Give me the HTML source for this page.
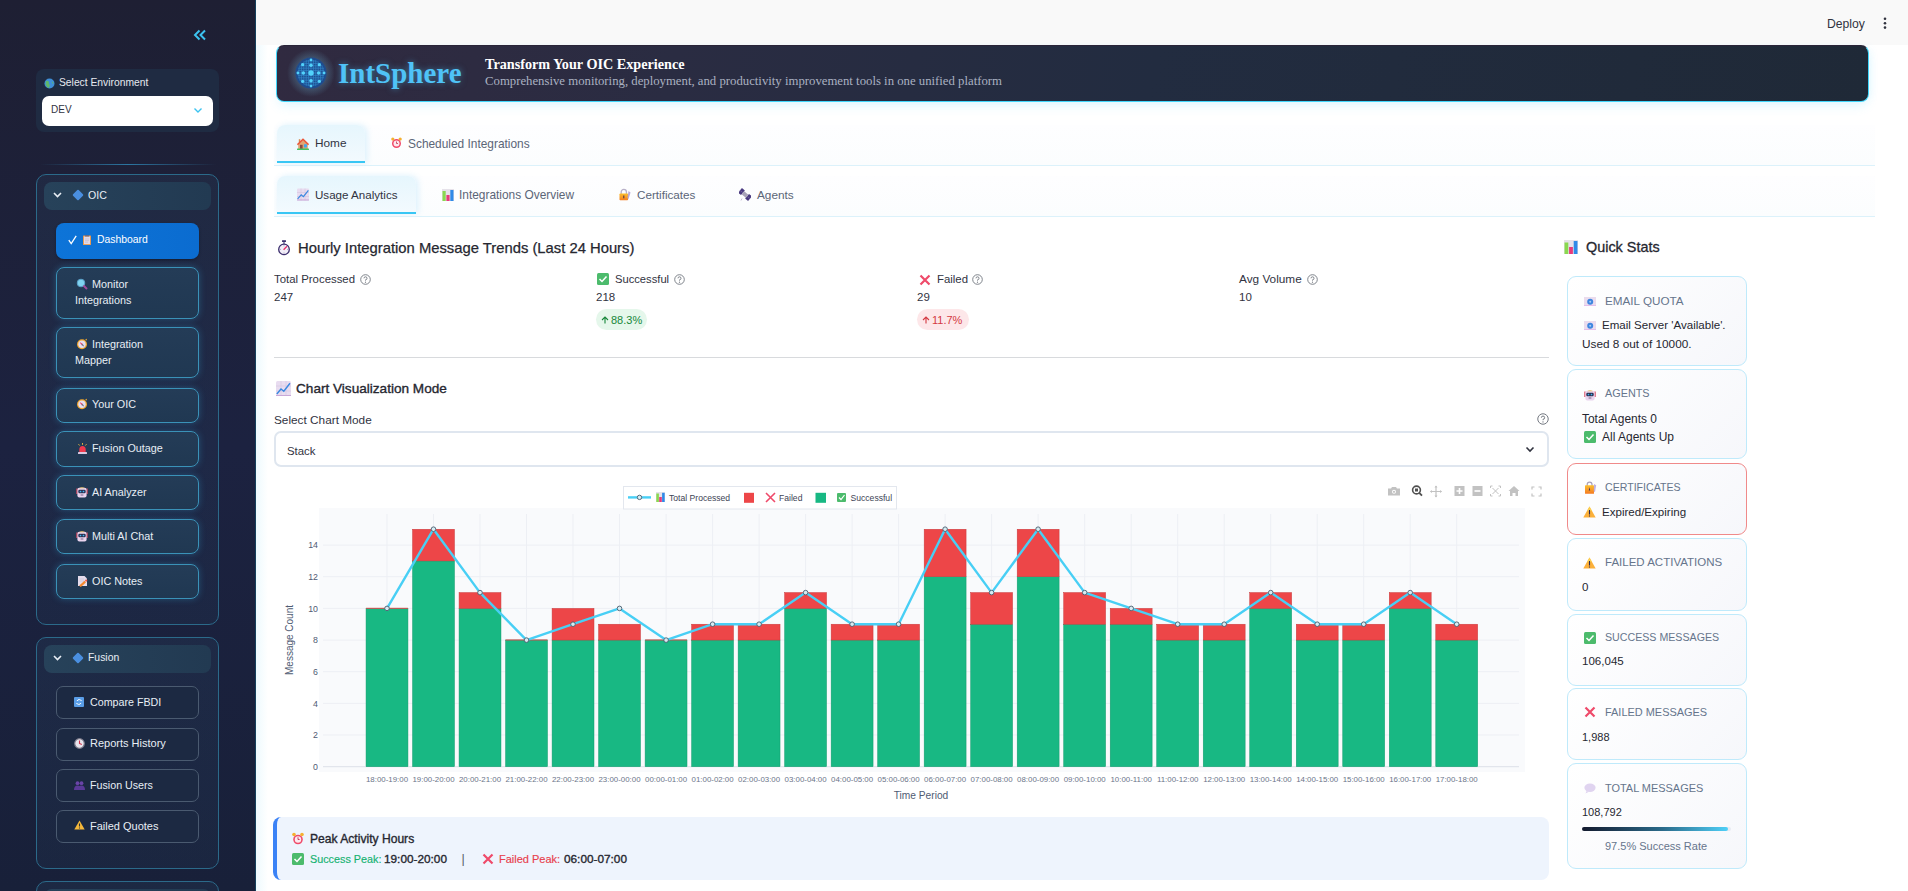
<!DOCTYPE html>
<html><head><meta charset="utf-8">
<style>
*{box-sizing:border-box;margin:0;padding:0}
html,body{width:1908px;height:891px;overflow:hidden;background:#fff;font-family:"Liberation Sans",sans-serif;color:#31333f}
.a{position:absolute}
.t{position:absolute;white-space:nowrap;line-height:1}
/* sidebar */
#sb{left:0;top:0;width:256px;height:891px;background:linear-gradient(180deg,#1e1f33 0%,#1c2240 50%,#182039 100%);border-right:1px solid #15405c}
#hdr{left:256px;top:0;width:1652px;height:45px;background:#f9f9f9}
#mainbg{left:256px;top:45px;width:1652px;height:846px;background:linear-gradient(90deg,#eefafe 0px,#ffffff 12px)}
.nbtn{position:absolute;left:56px;width:143px;border:1px solid #3a92b8;border-radius:8px;background:linear-gradient(180deg,#243c57,#203852);box-shadow:0 0 7px rgba(56,189,248,.28);color:#e8eef5;font-size:11.5px}
.fbtn{position:absolute;left:56px;width:143px;height:33px;border:1px solid #4a5a70;border-radius:7px;background:#1c2942;color:#e8eef5;font-size:11.5px}
.grp{position:absolute;left:36px;width:183px;border:1px solid #2b6a8a;border-radius:10px;background:linear-gradient(180deg,rgba(44,74,104,.22),rgba(40,70,100,.16))}
.ghdr{position:absolute;left:44px;width:167px;border-radius:8px;background:linear-gradient(90deg,#27425a,#223a52)}
.card{position:absolute;left:1567px;width:180px;border:1px solid #bfeafb;border-radius:9px;background:linear-gradient(135deg,#ffffff,#f6f7fb)}
.ct{position:absolute;left:38px;font-size:12px;color:#647189;letter-spacing:.1px}
.cv{position:absolute;left:15px;font-size:12px;color:#222}
</style></head><body>
<div id="sb" class="a"></div>
<div id="hdr" class="a"></div>
<div id="mainbg" class="a"></div>

<!-- SIDEBAR CONTENT -->
<svg class="a" style="left:193px;top:29px" width="14" height="12" viewBox="0 0 14 12"><path d="M6.5 1.5 L2 6 L6.5 10.5 M12 1.5 L7.5 6 L12 10.5" fill="none" stroke="#3cc3f0" stroke-width="2"/></svg>
<div class="a" style="left:36px;top:69px;width:183px;height:63px;background:#1f2b42;border-radius:8px"></div>
<svg class="a" style="left:44px;top:78px" width="11" height="11" viewBox="0 0 11 11"><circle cx="5.5" cy="5.5" r="5" fill="#3f8fd8"/><path d="M2 3 Q4 2 5 4 Q4 6 6 7 L5 10 Q2 9 1.5 6Z" fill="#5fb86a"/><path d="M7 1.5 Q9 3 8 5 L10 6" fill="#5fb86a"/></svg>
<div class="t" style="left:59px;top:78px;font-size:10.3px;color:#e6e9ef">Select Environment</div>
<div class="a" style="left:42px;top:96px;width:171px;height:30px;background:#fff;border-radius:7px"></div>
<div class="t" style="left:51px;top:105px;font-size:10px;color:#31333f">DEV</div>
<svg class="a" style="left:193px;top:107px" width="10" height="7" viewBox="0 0 10 7"><path d="M1.5 1.5 L5 5 L8.5 1.5" fill="none" stroke="#3cc3f0" stroke-width="1.4"/></svg>
<div class="a" style="left:40px;top:164px;width:176px;height:1px;background:linear-gradient(90deg,rgba(56,189,248,0),rgba(56,189,248,.55),rgba(56,189,248,0))"></div>

<div class="grp" style="top:174px;height:451px"></div>
<div class="ghdr" style="top:182px;height:28px"></div>
<svg class="a" style="left:53px;top:192px" width="9" height="6" viewBox="0 0 9 6"><path d="M1 1 L4.5 4.5 L8 1" fill="none" stroke="#e8eef5" stroke-width="1.6"/></svg>
<div class="a" style="left:74px;top:191px;width:8px;height:8px;background:#4a8fe0;transform:rotate(45deg);border-radius:1px"></div>
<div class="t" style="left:88px;top:190px;font-size:10.6px;color:#e8eef5">OIC</div>

<div class="a" style="left:56px;top:223px;width:143px;height:36px;border-radius:8px;background:linear-gradient(90deg,#0d74d8,#0b6cd0);box-shadow:0 1px 3px rgba(0,0,0,.3)"></div>
<svg class="a" style="left:68px;top:235px" width="9" height="10" viewBox="0 0 9 10"><path d="M0.8 5.2L3.2 8.6L8.2 0.8" stroke="#fff" stroke-width="1.3" fill="none"/></svg>
<svg class="a" style="left:83px;top:235px" width="8" height="10" viewBox="0 0 8 10"><rect x="0" y="0.5" width="8" height="9.5" rx=".6" fill="#ea9a50"/><rect x="1" y="1.5" width="6" height="7.6" fill="#e2dae8"/><rect x="2" y="0" width="4" height="1.6" rx=".4" fill="#6e6a80"/><path d="M2 4H6M2 5.6H6M2 7.2H5" stroke="#b8b0c4" stroke-width=".5"/></svg>
<div class="t" style="left:97px;top:235px;font-size:10.4px;color:#fff">Dashboard</div>

<div class="nbtn" style="top:267px;height:52px"></div>
<svg class="a" style="left:76px;top:278px" width="12" height="12" viewBox="0 0 12 12"><circle cx="5" cy="5" r="3.8" fill="#7fd3f0" stroke="#5aa0c8" stroke-width="1"/><path d="M7.5 7.5 L11 11" stroke="#a04a9a" stroke-width="2"/></svg>
<div class="t" style="left:92px;top:279px;font-size:10.8px;color:#e8eef5">Monitor</div>
<div class="t" style="left:75px;top:295px;font-size:10.8px;color:#e8eef5">Integrations</div>

<div class="nbtn" style="top:327px;height:51px"></div>
<svg class="a" style="left:76px;top:338px" width="12" height="12" viewBox="0 0 12 12"><circle cx="6" cy="6.3" r="5" fill="#f2a82e"/><circle cx="6" cy="6.3" r="3.7" fill="#e6def0"/><path d="M3.6 3.9L6.6 5.7L5.4 6.9Z" fill="#e84062"/><path d="M8.4 8.7L5.4 6.9L6.6 5.7Z" fill="#6a6a7a"/><path d="M9.2 1.2L11 0.8L10.5 2.8Z" fill="#f2a82e"/></svg>
<div class="t" style="left:92px;top:339px;font-size:10.8px;color:#e8eef5">Integration</div>
<div class="t" style="left:75px;top:355px;font-size:10.8px;color:#e8eef5">Mapper</div>

<div class="nbtn" style="top:388px;height:35px"></div>
<svg class="a" style="left:76px;top:398px" width="12" height="12" viewBox="0 0 12 12"><circle cx="6" cy="6.3" r="5" fill="#f2a82e"/><circle cx="6" cy="6.3" r="3.7" fill="#e6def0"/><path d="M3.6 3.9L6.6 5.7L5.4 6.9Z" fill="#e84062"/><path d="M8.4 8.7L5.4 6.9L6.6 5.7Z" fill="#6a6a7a"/><path d="M9.2 1.2L11 0.8L10.5 2.8Z" fill="#f2a82e"/></svg>
<div class="t" style="left:92px;top:399px;font-size:10.8px;color:#e8eef5">Your OIC</div>

<div class="nbtn" style="top:431px;height:36px"></div>
<svg class="a" style="left:77px;top:443px" width="11" height="11" viewBox="0 0 11 11"><path d="M2.3 9.5V6.5Q2.3 3 5.5 3Q8.7 3 8.7 6.5V9.5Z" fill="#f03a4e"/><rect x="1" y="9" width="9" height="2" rx=".5" fill="#d8c8e0"/><path d="M5.5 0V1.8M1.5 1.2L2.6 2.5M9.5 1.2L8.4 2.5" stroke="#f5c040" stroke-width=".9"/></svg>
<div class="t" style="left:92px;top:443px;font-size:10.8px;color:#e8eef5">Fusion Outage</div>

<div class="nbtn" style="top:475px;height:35px"></div>
<svg class="a" style="left:76px;top:486px" width="12" height="12" viewBox="0 0 12 12"><rect x="0.3" y="2.5" width="1.3" height="5.5" fill="#d84a62"/><rect x="10.4" y="2.5" width="1.3" height="5.5" fill="#d84a62"/><rect x="1.4" y="1.8" width="9.2" height="9.6" rx="2" fill="#ead4ee"/><path d="M3 2.2Q6 0.2 9 2.2Z" fill="#e8c060"/><rect x="2.3" y="3.8" width="7.4" height="3.4" rx="1.2" fill="#2a3052"/><circle cx="4.5" cy="5.5" r=".85" fill="#3fb6f2"/><circle cx="7.5" cy="5.5" r=".85" fill="#3fb6f2"/><rect x="4.6" y="8.6" width="2.8" height=".8" fill="#5a4a70"/></svg>
<div class="t" style="left:92px;top:487px;font-size:10.8px;color:#e8eef5">AI Analyzer</div>

<div class="nbtn" style="top:519px;height:35px"></div>
<svg class="a" style="left:76px;top:530px" width="12" height="12" viewBox="0 0 12 12"><rect x="0.3" y="2.5" width="1.3" height="5.5" fill="#d84a62"/><rect x="10.4" y="2.5" width="1.3" height="5.5" fill="#d84a62"/><rect x="1.4" y="1.8" width="9.2" height="9.6" rx="2" fill="#ead4ee"/><path d="M3 2.2Q6 0.2 9 2.2Z" fill="#e8c060"/><rect x="2.3" y="3.8" width="7.4" height="3.4" rx="1.2" fill="#2a3052"/><circle cx="4.5" cy="5.5" r=".85" fill="#3fb6f2"/><circle cx="7.5" cy="5.5" r=".85" fill="#3fb6f2"/><rect x="4.6" y="8.6" width="2.8" height=".8" fill="#5a4a70"/></svg>
<div class="t" style="left:92px;top:531px;font-size:10.8px;color:#e8eef5">Multi AI Chat</div>

<div class="nbtn" style="top:564px;height:35px"></div>
<svg class="a" style="left:78px;top:576px" width="10" height="11" viewBox="0 0 10 11"><path d="M0 0H6.5L9 2.5V10H0Z" fill="#e4dcec"/><path d="M1.5 3H6M1.5 5H6" stroke="#c8c0d4" stroke-width=".6"/><path d="M2 10.3L7.2 5.6" stroke="#f4882e" stroke-width="2.2"/><circle cx="8.2" cy="4.6" r="1.1" fill="#f25a48"/></svg>
<div class="t" style="left:92px;top:576px;font-size:10.8px;color:#e8eef5">OIC Notes</div>

<div class="grp" style="top:637px;height:232px"></div>
<div class="ghdr" style="top:645px;height:28px"></div>
<svg class="a" style="left:53px;top:655px" width="9" height="6" viewBox="0 0 9 6"><path d="M1 1 L4.5 4.5 L8 1" fill="none" stroke="#e8eef5" stroke-width="1.6"/></svg>
<div class="a" style="left:74px;top:654px;width:8px;height:8px;background:#4a8fe0;transform:rotate(45deg);border-radius:1px"></div>
<div class="t" style="left:88px;top:653px;font-size:10.4px;color:#e8eef5">Fusion</div>

<div class="fbtn" style="top:686px"></div>
<svg class="a" style="left:74px;top:697px" width="10" height="10" viewBox="0 0 10 10"><rect width="10" height="10" rx="1" fill="#5a9ee8"/><path d="M3 4 A2.5 2.5 0 0 1 7.5 4 M7 6 A2.5 2.5 0 0 1 2.5 6" fill="none" stroke="#fff" stroke-width="1"/></svg>
<div class="t" style="left:90px;top:697px;font-size:10.7px;color:#e8eef5">Compare FBDI</div>
<div class="fbtn" style="top:728px"></div>
<svg class="a" style="left:74px;top:738px" width="11" height="11" viewBox="0 0 11 11"><circle cx="5.5" cy="5.5" r="4.8" fill="#e8e4ec" stroke="#7a7888" stroke-width="1.2"/><path d="M5.5 2.6 L5.5 5.5 L7.8 6.5" stroke="#d03048" stroke-width="1.1" fill="none"/></svg>
<div class="t" style="left:90px;top:738px;font-size:11px;color:#e8eef5">Reports History</div>
<div class="fbtn" style="top:769px"></div>
<svg class="a" style="left:74px;top:780px" width="11" height="10" viewBox="0 0 11 10"><circle cx="3.5" cy="3.2" r="1.9" fill="#6a44a8"/><circle cx="7.5" cy="3.2" r="1.9" fill="#6a44a8"/><path d="M0 10 Q0 5.5 3.5 5.5 Q7 5.5 7 10Z M4 10 Q4 5.5 7.5 5.5 Q11 5.5 11 10Z" fill="#5a3a98"/></svg>
<div class="t" style="left:90px;top:780px;font-size:10.7px;color:#e8eef5">Fusion Users</div>
<div class="fbtn" style="top:810px"></div>
<svg class="a" style="left:74px;top:820px" width="11" height="10" viewBox="0 0 11 10"><path d="M5.5 0.5 L10.7 9.5 L0.3 9.5Z" fill="#f5b83a"/><path d="M5.5 3.5 L5.5 6.5 M5.5 7.5 L5.5 8.5" stroke="#333" stroke-width="1.1"/></svg>
<div class="t" style="left:90px;top:821px;font-size:11px;color:#e8eef5">Failed Quotes</div>
<div class="grp" style="top:881px;height:40px"></div>
<div class="ghdr" style="top:889px;height:28px"></div>


<!-- HEADER -->
<div class="t" style="left:1827px;top:18px;font-size:12.2px;color:#31333f">Deploy</div>
<svg class="a" style="left:1882.5px;top:17px" width="4" height="12" viewBox="0 0 4 12"><circle cx="2" cy="1.8" r="1.3" fill="#31333f"/><circle cx="2" cy="6.2" r="1.3" fill="#31333f"/><circle cx="2" cy="10.6" r="1.3" fill="#31333f"/></svg>

<!-- BANNER -->
<div class="a" style="left:276px;top:45px;width:1593px;height:57px;border-radius:8px;background:linear-gradient(100deg,#302a40 0%,#2a2c42 25%,#222c40 55%,#1f2937 100%);border:1.5px solid #3fd6fb;border-top-color:#2a2438;box-shadow:0 6px 12px -3px rgba(90,210,250,.2),4px 0 10px -4px rgba(90,210,250,.15)"></div>
<svg class="a" style="left:286px;top:48px" width="50" height="50" viewBox="-9.5 -9.5 50 50">
<defs><radialGradient id="gl"><stop offset="0.55" stop-color="#6ab0d0" stop-opacity=".35"/><stop offset="1" stop-color="#6ab0d0" stop-opacity="0"/></radialGradient><clipPath id="gc"><circle cx="15.5" cy="15.5" r="13.6"/></clipPath></defs>
<circle cx="15.5" cy="15.5" r="24" fill="url(#gl)"/>
<circle cx="15.5" cy="15.5" r="15.6" fill="#1f4c8e"/>
<circle cx="15.5" cy="15.5" r="13.6" fill="#1d4f90"/>
<path clip-path="url(#gc)" d="M1.1 2V29M2 1.1H29M3.5 2V29M2 3.5H29M5.9 2V29M2 5.9H29M8.3 2V29M2 8.3H29M10.7 2V29M2 10.7H29M13.1 2V29M2 13.1H29M15.5 2V29M2 15.5H29M17.9 2V29M2 17.9H29M20.3 2V29M2 20.3H29M22.7 2V29M2 22.7H29M25.1 2V29M2 25.1H29M27.5 2V29M2 27.5H29M29.9 2V29M2 29.9H29" stroke="#3389cc" stroke-width="0.65" fill="none"/>
<g fill="#52d2fb"><circle cx="15.5" cy="15.5" r="2.7"/><circle cx="7.8" cy="15.5" r="1.8"/><circle cx="23.2" cy="15.5" r="1.8"/><circle cx="15.5" cy="7.8" r="1.8"/><circle cx="15.5" cy="23.2" r="1.8"/><circle cx="2.4" cy="15.5" r="1.4"/><circle cx="28.6" cy="15.5" r="1.4"/><circle cx="15.5" cy="2.4" r="1.4"/><circle cx="15.5" cy="28.6" r="1.4"/><circle cx="7.2" cy="7.2" r="1.6"/><circle cx="23.8" cy="7.2" r="1.6"/><circle cx="7.2" cy="23.8" r="1.6"/><circle cx="23.8" cy="23.8" r="1.6"/></g></svg>
<div class="t" style="left:338px;top:59px;font-family:'Liberation Serif',serif;font-weight:700;font-size:29px;color:#4fc3f7;text-shadow:0 0 6px rgba(79,195,247,.5)">IntSphere</div>
<div class="t" style="left:485px;top:57px;font-family:'Liberation Serif',serif;font-weight:700;font-size:14.2px;color:#fff">Transform Your OIC Experience</div>
<div class="t" style="left:485px;top:75px;font-family:'Liberation Serif',serif;font-size:12.75px;color:#aab1c1">Comprehensive monitoring, deployment, and productivity improvement tools in one unified platform</div>

<!-- TABS ROW 1 -->
<div class="a" style="left:274px;top:125px;width:1601px;height:40px;background:linear-gradient(180deg,#fefeff,#fbfdfe)"></div>
<div class="a" style="left:274px;top:176px;width:1601px;height:40px;background:linear-gradient(180deg,#fefeff,#fbfdfe)"></div>
<div class="a" style="left:274px;top:165px;width:1601px;height:1px;background:#dcf2fb"></div>
<div class="a" style="left:277px;top:125px;width:88px;height:38px;border-radius:8px 8px 0 0;background:linear-gradient(180deg,#e6f6fd,#f3fafe);box-shadow:2px 0 6px rgba(215,240,252,.9)"></div>
<div class="a" style="left:277px;top:161px;width:88px;height:2px;background:#38c6f4"></div>
<svg class="a" style="left:297px;top:138px" width="12" height="12" viewBox="0 0 12 12"><rect x="1.8" y="1.2" width="1.5" height="3" fill="#d88a50"/><path d="M1.2 6L6 1.8L10.8 6V11H1.2Z" fill="#e2a474"/><path d="M0.4 6.6L6 1.2L11.6 6.6" stroke="#ea5438" stroke-width="1.5" fill="none"/><rect x="3" y="6.8" width="2.6" height="4.2" fill="#8a4a40"/><rect x="6.9" y="6.2" width="3" height="3.2" rx=".6" fill="#3aa8f0"/><rect x="0" y="10.4" width="12" height="1.5" rx=".5" fill="#44c462"/></svg>
<div class="t" style="left:315px;top:138px;font-size:11.8px;color:#31333f">Home</div>
<svg class="a" style="left:391px;top:137px" width="11" height="12" viewBox="0 0 11 12"><circle cx="5.5" cy="6.5" r="4.5" fill="#f04a6a"/><circle cx="5.5" cy="6.5" r="3" fill="#fde8ee"/><circle cx="1.8" cy="2" r="1.6" fill="#f5b030"/><circle cx="9.2" cy="2" r="1.6" fill="#f5b030"/><path d="M5.5 4.5 V6.5 H7" stroke="#c03050" stroke-width=".8" fill="none"/></svg>
<div class="t" style="left:408px;top:139px;font-size:11.9px;color:#5b6577">Scheduled Integrations</div>

<!-- TABS ROW 2 -->
<div class="a" style="left:274px;top:216px;width:1601px;height:1px;background:#dcf2fb"></div>
<div class="a" style="left:277px;top:176px;width:139px;height:37px;border-radius:8px 8px 0 0;background:linear-gradient(180deg,#e6f6fd,#f3fafe);box-shadow:2px 0 6px rgba(215,240,252,.9)"></div>
<div class="a" style="left:277px;top:212px;width:139px;height:2px;background:#38c6f4"></div>
<svg class="a" style="left:297px;top:188px" width="12" height="13" viewBox="0 0 12 13"><rect y="0.5" width="12" height="12" rx="1" fill="#e8dcf0"/><path d="M4 0.5V12.5M8 0.5V12.5M0 4.5H12M0 8.5H12" stroke="#d0c0dc" stroke-width=".5"/><rect y="11.5" width="12" height="1" fill="#c8a8d8"/><path d="M0.6 10.8L4.2 6.8L6.4 8.6L11.4 2.4" stroke="#3a88e0" stroke-width="1.2" fill="none"/></svg>
<div class="t" style="left:315px;top:189px;font-size:11.6px;color:#31333f">Usage Analytics</div>
<svg class="a" style="left:442px;top:189px" width="12" height="12" viewBox="0 0 12 12"><rect width="12" height="12" fill="#e6e2ea"/><rect x="0.5" y="2" width="3.2" height="10" fill="#8ad850"/><rect x="4.4" y="6" width="3.2" height="6" fill="#e83a7a"/><rect x="8.3" y="1" width="3.2" height="11" fill="#2f8ae8"/></svg>
<div class="t" style="left:459px;top:190px;font-size:11.9px;color:#5b6577">Integrations Overview</div>
<svg class="a" style="left:619px;top:188px" width="12" height="13" viewBox="0 0 12 13"><defs><linearGradient id="lk" x1="0" y1="0" x2="0" y2="1"><stop offset="0" stop-color="#fbc02d"/><stop offset="1" stop-color="#f57c1f"/></linearGradient></defs><path d="M2.2 6 V4 A2.6 2.6 0 0 1 7.4 4 V6" stroke="#b8b0c8" stroke-width="1.3" fill="none"/><rect x="0.5" y="5.5" width="8.6" height="6.8" rx="0.8" fill="url(#lk)"/><path d="M4.8 7.5V10.3" stroke="#3a2a50" stroke-width="1"/><path d="M9.5 3L11.5 4.5L9.5 11L8.5 10Z" fill="#b8a8d8"/></svg>
<div class="t" style="left:637px;top:189px;font-size:11.7px;color:#5b6577">Certificates</div>
<svg class="a" style="left:739px;top:188px" width="12" height="13" viewBox="0 0 12 13"><g transform="rotate(40 6 6.5)"><rect x="-0.5" y="3.5" width="3.8" height="6" fill="#4a3a80"/><rect x="8.7" y="3.5" width="3.8" height="6" fill="#4a3a80"/><rect x="3.3" y="4.5" width="5.4" height="4" fill="#a8a2b8"/><path d="M0 6.5H3M9 6.5H12" stroke="#8a80b0" stroke-width=".5"/></g><path d="M3 10.5L2 12.5" stroke="#c8c0d8" stroke-width="1"/></svg>
<div class="t" style="left:757px;top:190px;font-size:11.8px;color:#5b6577">Agents</div>

<!-- HEADING -->
<svg class="a" style="left:277px;top:239px" width="14" height="17" viewBox="0 0 14 17"><rect x="5" y="1.2" width="4" height="1.8" rx=".4" fill="#35286a"/><rect x="6.3" y="2.8" width="1.4" height="2.2" fill="#6a6a9a"/><circle cx="7" cy="10.4" r="5.3" fill="#f2eef8" stroke="#3a2c6c" stroke-width="1.3"/><path d="M7 6.3V7.3M7 13.5V14.5M2.9 10.4H3.9M10.1 10.4H11.1" stroke="#8a80a8" stroke-width=".7"/><path d="M6.6 10.8L10 7.2" stroke="#e8306e" stroke-width="1.3"/></svg>
<div class="t" style="left:298px;top:240.5px;font-size:14.8px;color:#262730;-webkit-text-stroke:.25px #262730">Hourly Integration Message Trends (Last 24 Hours)</div>

<!-- STATS -->
<div class="t" style="left:274px;top:274px;font-size:11.4px;color:#31333f">Total Processed</div>
<svg class="a" style="left:360px;top:274px" width="11" height="11" viewBox="0 0 11 11"><circle cx="5.5" cy="5.5" r="4.8" fill="none" stroke="#72777f" stroke-width=".9"/><path d="M4 4.3 A1.5 1.5 0 1 1 5.5 5.8 V6.6" stroke="#72777f" stroke-width=".9" fill="none"/><circle cx="5.5" cy="8.2" r=".6" fill="#72777f"/></svg>
<div class="t" style="left:274px;top:292px;font-size:11.5px;color:#31333f">247</div>

<svg class="a" style="left:597px;top:273px" width="12" height="12" viewBox="0 0 12 12"><rect width="12" height="12" rx="1.5" fill="#4cbb6c"/><path d="M2.5 6 L5 8.5 L9.5 3.5" stroke="#fff" stroke-width="1.5" fill="none"/></svg>
<div class="t" style="left:615px;top:274px;font-size:11.2px;color:#31333f">Successful</div>
<svg class="a" style="left:674px;top:274px" width="11" height="11" viewBox="0 0 11 11"><circle cx="5.5" cy="5.5" r="4.8" fill="none" stroke="#72777f" stroke-width=".9"/><path d="M4 4.3 A1.5 1.5 0 1 1 5.5 5.8 V6.6" stroke="#72777f" stroke-width=".9" fill="none"/><circle cx="5.5" cy="8.2" r=".6" fill="#72777f"/></svg>
<div class="t" style="left:596px;top:292px;font-size:11.5px;color:#31333f">218</div>
<div class="a" style="left:596px;top:309px;width:51px;height:21px;border-radius:10.5px;background:#e5f7eb"></div>
<svg class="a" style="left:600.5px;top:315.5px" width="8" height="8" viewBox="0 0 8 8"><path d="M4 7.5V1M1 4L4 1L7 4" stroke="#17873a" stroke-width="1.1" fill="none"/></svg>
<div class="t" style="left:611px;top:315px;font-size:11px;color:#17873a">88.3%</div>

<svg class="a" style="left:919px;top:274px" width="12" height="12" viewBox="0 0 12 12"><path d="M1.5 1.5 L10.5 10.5 M10.5 1.5 L1.5 10.5" stroke="#ef4a6a" stroke-width="2.2"/></svg>
<div class="t" style="left:937px;top:274px;font-size:11.4px;color:#31333f">Failed</div>
<svg class="a" style="left:972px;top:274px" width="11" height="11" viewBox="0 0 11 11"><circle cx="5.5" cy="5.5" r="4.8" fill="none" stroke="#72777f" stroke-width=".9"/><path d="M4 4.3 A1.5 1.5 0 1 1 5.5 5.8 V6.6" stroke="#72777f" stroke-width=".9" fill="none"/><circle cx="5.5" cy="8.2" r=".6" fill="#72777f"/></svg>
<div class="t" style="left:917px;top:292px;font-size:11.5px;color:#31333f">29</div>
<div class="a" style="left:917px;top:309px;width:52px;height:21px;border-radius:10.5px;background:#fde7e9"></div>
<svg class="a" style="left:921.5px;top:315.5px" width="8" height="8" viewBox="0 0 8 8"><path d="M4 7.5V1M1 4L4 1L7 4" stroke="#d43a42" stroke-width="1.1" fill="none"/></svg>
<div class="t" style="left:932px;top:315px;font-size:11px;color:#d43a42">11.7%</div>

<div class="t" style="left:1239px;top:274px;font-size:11.8px;color:#31333f">Avg Volume</div>
<svg class="a" style="left:1307px;top:274px" width="11" height="11" viewBox="0 0 11 11"><circle cx="5.5" cy="5.5" r="4.8" fill="none" stroke="#72777f" stroke-width=".9"/><path d="M4 4.3 A1.5 1.5 0 1 1 5.5 5.8 V6.6" stroke="#72777f" stroke-width=".9" fill="none"/><circle cx="5.5" cy="8.2" r=".6" fill="#72777f"/></svg>
<div class="t" style="left:1239px;top:292px;font-size:11.5px;color:#31333f">10</div>

<div class="a" style="left:274px;top:357px;width:1275px;height:1px;background:#d8dadd"></div>

<!-- CHART MODE -->
<svg class="a" style="left:276px;top:381px" width="15" height="15" viewBox="0 0 15 15"><rect width="15" height="15" rx="1.5" fill="#e8dcf0"/><path d="M5 0V15M10 0V15M0 5H15M0 10H15" stroke="#d0c0dc" stroke-width=".5"/><rect y="14" width="15" height="1" fill="#c8a8d8"/><path d="M0.8 13L5 8L7.8 10.2L14 2.2" stroke="#3a88e0" stroke-width="1.4" fill="none"/></svg>
<div class="t" style="left:296px;top:382px;font-size:13.6px;color:#262730;-webkit-text-stroke:.35px #262730">Chart Visualization Mode</div>
<div class="t" style="left:274px;top:415px;font-size:11.8px;color:#31333f">Select Chart Mode</div>
<svg class="a" style="left:1537px;top:413px" width="12" height="12" viewBox="0 0 11 11"><circle cx="5.5" cy="5.5" r="4.8" fill="none" stroke="#72777f" stroke-width=".9"/><path d="M4 4.3 A1.5 1.5 0 1 1 5.5 5.8 V6.6" stroke="#72777f" stroke-width=".9" fill="none"/><circle cx="5.5" cy="8.2" r=".6" fill="#72777f"/></svg>
<div class="a" style="left:274px;top:431px;width:1275px;height:36px;border:2.6px solid #dfe6ef;border-radius:7px;background:#fff"></div>
<div class="t" style="left:287px;top:446px;font-size:11.4px;color:#31333f">Stack</div>
<svg class="a" style="left:1525px;top:446px" width="10" height="7" viewBox="0 0 10 7"><path d="M1.5 1.5 L5 5 L8.5 1.5" fill="none" stroke="#31333f" stroke-width="1.6"/></svg>

<!-- CHART -->
<svg class="a" style="left:0;top:0" width="1908" height="891" viewBox="0 0 1908 891">
<rect x="319" y="508" width="1206" height="264" fill="#f9fafc"/>
<path d="M323 735.0H1519 M323 703.4H1519 M323 671.7H1519 M323 640.1H1519 M323 608.4H1519 M323 576.7H1519 M323 545.1H1519 M387.0 514V766 M433.5 514V766 M480.0 514V766 M526.5 514V766 M573.0 514V766 M619.5 514V766 M666.1 514V766 M712.6 514V766 M759.1 514V766 M805.6 514V766 M852.1 514V766 M898.6 514V766 M945.1 514V766 M991.6 514V766 M1038.1 514V766 M1084.7 514V766 M1131.2 514V766 M1177.7 514V766 M1224.2 514V766 M1270.7 514V766 M1317.2 514V766 M1363.7 514V766 M1410.2 514V766 M1456.7 514V766" stroke="#edeff4" stroke-width="1" fill="none"/>
<path d="M323 766.7H1519" stroke="#e2e5ec" stroke-width="1.2"/>
<rect x="366.05" y="608.40" width="41.9" height="158.30" fill="#18b883" stroke="#139a6c" stroke-width="0.5"/>
<rect x="366.05" y="607.80" width="41.9" height="1" fill="#d84a4a"/>
<rect x="412.56" y="560.91" width="41.9" height="205.79" fill="#18b883" stroke="#139a6c" stroke-width="0.5"/>
<rect x="412.56" y="529.25" width="41.9" height="31.66" fill="#ed4648" stroke="#c83a3c" stroke-width="0.5"/>
<rect x="459.07" y="608.40" width="41.9" height="158.30" fill="#18b883" stroke="#139a6c" stroke-width="0.5"/>
<rect x="459.07" y="592.57" width="41.9" height="15.83" fill="#ed4648" stroke="#c83a3c" stroke-width="0.5"/>
<rect x="505.58" y="640.06" width="41.9" height="126.64" fill="#18b883" stroke="#139a6c" stroke-width="0.5"/>
<rect x="505.58" y="639.46" width="41.9" height="1" fill="#d84a4a"/>
<rect x="552.09" y="640.06" width="41.9" height="126.64" fill="#18b883" stroke="#139a6c" stroke-width="0.5"/>
<rect x="552.09" y="608.40" width="41.9" height="31.66" fill="#ed4648" stroke="#c83a3c" stroke-width="0.5"/>
<rect x="598.60" y="640.06" width="41.9" height="126.64" fill="#18b883" stroke="#139a6c" stroke-width="0.5"/>
<rect x="598.60" y="624.23" width="41.9" height="15.83" fill="#ed4648" stroke="#c83a3c" stroke-width="0.5"/>
<rect x="645.11" y="640.06" width="41.9" height="126.64" fill="#18b883" stroke="#139a6c" stroke-width="0.5"/>
<rect x="645.11" y="639.46" width="41.9" height="1" fill="#d84a4a"/>
<rect x="691.62" y="640.06" width="41.9" height="126.64" fill="#18b883" stroke="#139a6c" stroke-width="0.5"/>
<rect x="691.62" y="624.23" width="41.9" height="15.83" fill="#ed4648" stroke="#c83a3c" stroke-width="0.5"/>
<rect x="738.13" y="640.06" width="41.9" height="126.64" fill="#18b883" stroke="#139a6c" stroke-width="0.5"/>
<rect x="738.13" y="624.23" width="41.9" height="15.83" fill="#ed4648" stroke="#c83a3c" stroke-width="0.5"/>
<rect x="784.64" y="608.40" width="41.9" height="158.30" fill="#18b883" stroke="#139a6c" stroke-width="0.5"/>
<rect x="784.64" y="592.57" width="41.9" height="15.83" fill="#ed4648" stroke="#c83a3c" stroke-width="0.5"/>
<rect x="831.15" y="640.06" width="41.9" height="126.64" fill="#18b883" stroke="#139a6c" stroke-width="0.5"/>
<rect x="831.15" y="624.23" width="41.9" height="15.83" fill="#ed4648" stroke="#c83a3c" stroke-width="0.5"/>
<rect x="877.66" y="640.06" width="41.9" height="126.64" fill="#18b883" stroke="#139a6c" stroke-width="0.5"/>
<rect x="877.66" y="624.23" width="41.9" height="15.83" fill="#ed4648" stroke="#c83a3c" stroke-width="0.5"/>
<rect x="924.17" y="576.74" width="41.9" height="189.96" fill="#18b883" stroke="#139a6c" stroke-width="0.5"/>
<rect x="924.17" y="529.25" width="41.9" height="47.49" fill="#ed4648" stroke="#c83a3c" stroke-width="0.5"/>
<rect x="970.68" y="624.23" width="41.9" height="142.47" fill="#18b883" stroke="#139a6c" stroke-width="0.5"/>
<rect x="970.68" y="592.57" width="41.9" height="31.66" fill="#ed4648" stroke="#c83a3c" stroke-width="0.5"/>
<rect x="1017.19" y="576.74" width="41.9" height="189.96" fill="#18b883" stroke="#139a6c" stroke-width="0.5"/>
<rect x="1017.19" y="529.25" width="41.9" height="47.49" fill="#ed4648" stroke="#c83a3c" stroke-width="0.5"/>
<rect x="1063.70" y="624.23" width="41.9" height="142.47" fill="#18b883" stroke="#139a6c" stroke-width="0.5"/>
<rect x="1063.70" y="592.57" width="41.9" height="31.66" fill="#ed4648" stroke="#c83a3c" stroke-width="0.5"/>
<rect x="1110.21" y="624.23" width="41.9" height="142.47" fill="#18b883" stroke="#139a6c" stroke-width="0.5"/>
<rect x="1110.21" y="608.40" width="41.9" height="15.83" fill="#ed4648" stroke="#c83a3c" stroke-width="0.5"/>
<rect x="1156.72" y="640.06" width="41.9" height="126.64" fill="#18b883" stroke="#139a6c" stroke-width="0.5"/>
<rect x="1156.72" y="624.23" width="41.9" height="15.83" fill="#ed4648" stroke="#c83a3c" stroke-width="0.5"/>
<rect x="1203.23" y="640.06" width="41.9" height="126.64" fill="#18b883" stroke="#139a6c" stroke-width="0.5"/>
<rect x="1203.23" y="624.23" width="41.9" height="15.83" fill="#ed4648" stroke="#c83a3c" stroke-width="0.5"/>
<rect x="1249.74" y="608.40" width="41.9" height="158.30" fill="#18b883" stroke="#139a6c" stroke-width="0.5"/>
<rect x="1249.74" y="592.57" width="41.9" height="15.83" fill="#ed4648" stroke="#c83a3c" stroke-width="0.5"/>
<rect x="1296.25" y="640.06" width="41.9" height="126.64" fill="#18b883" stroke="#139a6c" stroke-width="0.5"/>
<rect x="1296.25" y="624.23" width="41.9" height="15.83" fill="#ed4648" stroke="#c83a3c" stroke-width="0.5"/>
<rect x="1342.76" y="640.06" width="41.9" height="126.64" fill="#18b883" stroke="#139a6c" stroke-width="0.5"/>
<rect x="1342.76" y="624.23" width="41.9" height="15.83" fill="#ed4648" stroke="#c83a3c" stroke-width="0.5"/>
<rect x="1389.27" y="608.40" width="41.9" height="158.30" fill="#18b883" stroke="#139a6c" stroke-width="0.5"/>
<rect x="1389.27" y="592.57" width="41.9" height="15.83" fill="#ed4648" stroke="#c83a3c" stroke-width="0.5"/>
<rect x="1435.78" y="640.06" width="41.9" height="126.64" fill="#18b883" stroke="#139a6c" stroke-width="0.5"/>
<rect x="1435.78" y="624.23" width="41.9" height="15.83" fill="#ed4648" stroke="#c83a3c" stroke-width="0.5"/>
<polyline points="387.0,608.4 433.5,529.2 480.0,592.6 526.5,640.1 573.0,624.2 619.5,608.4 666.1,640.1 712.6,624.2 759.1,624.2 805.6,592.6 852.1,624.2 898.6,624.2 945.1,529.2 991.6,592.6 1038.1,529.2 1084.7,592.6 1131.2,608.4 1177.7,624.2 1224.2,624.2 1270.7,592.6 1317.2,624.2 1363.7,624.2 1410.2,592.6 1456.7,624.2" fill="none" stroke="#48cff5" stroke-width="2.4" stroke-linejoin="round"/>
<circle cx="387.0" cy="608.4" r="2.3" fill="#d6ecf3" stroke="#4a5e6e" stroke-width="0.9"/>
<circle cx="433.5" cy="529.2" r="2.3" fill="#d6ecf3" stroke="#4a5e6e" stroke-width="0.9"/>
<circle cx="480.0" cy="592.6" r="2.3" fill="#d6ecf3" stroke="#4a5e6e" stroke-width="0.9"/>
<circle cx="526.5" cy="640.1" r="2.3" fill="#d6ecf3" stroke="#4a5e6e" stroke-width="0.9"/>
<circle cx="573.0" cy="624.2" r="2.3" fill="#d6ecf3" stroke="#4a5e6e" stroke-width="0.9"/>
<circle cx="619.5" cy="608.4" r="2.3" fill="#d6ecf3" stroke="#4a5e6e" stroke-width="0.9"/>
<circle cx="666.1" cy="640.1" r="2.3" fill="#d6ecf3" stroke="#4a5e6e" stroke-width="0.9"/>
<circle cx="712.6" cy="624.2" r="2.3" fill="#d6ecf3" stroke="#4a5e6e" stroke-width="0.9"/>
<circle cx="759.1" cy="624.2" r="2.3" fill="#d6ecf3" stroke="#4a5e6e" stroke-width="0.9"/>
<circle cx="805.6" cy="592.6" r="2.3" fill="#d6ecf3" stroke="#4a5e6e" stroke-width="0.9"/>
<circle cx="852.1" cy="624.2" r="2.3" fill="#d6ecf3" stroke="#4a5e6e" stroke-width="0.9"/>
<circle cx="898.6" cy="624.2" r="2.3" fill="#d6ecf3" stroke="#4a5e6e" stroke-width="0.9"/>
<circle cx="945.1" cy="529.2" r="2.3" fill="#d6ecf3" stroke="#4a5e6e" stroke-width="0.9"/>
<circle cx="991.6" cy="592.6" r="2.3" fill="#d6ecf3" stroke="#4a5e6e" stroke-width="0.9"/>
<circle cx="1038.1" cy="529.2" r="2.3" fill="#d6ecf3" stroke="#4a5e6e" stroke-width="0.9"/>
<circle cx="1084.7" cy="592.6" r="2.3" fill="#d6ecf3" stroke="#4a5e6e" stroke-width="0.9"/>
<circle cx="1131.2" cy="608.4" r="2.3" fill="#d6ecf3" stroke="#4a5e6e" stroke-width="0.9"/>
<circle cx="1177.7" cy="624.2" r="2.3" fill="#d6ecf3" stroke="#4a5e6e" stroke-width="0.9"/>
<circle cx="1224.2" cy="624.2" r="2.3" fill="#d6ecf3" stroke="#4a5e6e" stroke-width="0.9"/>
<circle cx="1270.7" cy="592.6" r="2.3" fill="#d6ecf3" stroke="#4a5e6e" stroke-width="0.9"/>
<circle cx="1317.2" cy="624.2" r="2.3" fill="#d6ecf3" stroke="#4a5e6e" stroke-width="0.9"/>
<circle cx="1363.7" cy="624.2" r="2.3" fill="#d6ecf3" stroke="#4a5e6e" stroke-width="0.9"/>
<circle cx="1410.2" cy="592.6" r="2.3" fill="#d6ecf3" stroke="#4a5e6e" stroke-width="0.9"/>
<circle cx="1456.7" cy="624.2" r="2.3" fill="#d6ecf3" stroke="#4a5e6e" stroke-width="0.9"/>
<text x="318" y="769.9" text-anchor="end" font-size="8.8" fill="#4f5b73" font-family="Liberation Sans">0</text>
<text x="318" y="738.2" text-anchor="end" font-size="8.8" fill="#4f5b73" font-family="Liberation Sans">2</text>
<text x="318" y="706.6" text-anchor="end" font-size="8.8" fill="#4f5b73" font-family="Liberation Sans">4</text>
<text x="318" y="674.9" text-anchor="end" font-size="8.8" fill="#4f5b73" font-family="Liberation Sans">6</text>
<text x="318" y="643.3" text-anchor="end" font-size="8.8" fill="#4f5b73" font-family="Liberation Sans">8</text>
<text x="318" y="611.6" text-anchor="end" font-size="8.8" fill="#4f5b73" font-family="Liberation Sans">10</text>
<text x="318" y="579.9" text-anchor="end" font-size="8.8" fill="#4f5b73" font-family="Liberation Sans">12</text>
<text x="318" y="548.3" text-anchor="end" font-size="8.8" fill="#4f5b73" font-family="Liberation Sans">14</text>
<text x="387.0" y="782" text-anchor="middle" font-size="7.9" fill="#6b7489" font-family="Liberation Sans">18:00-19:00</text>
<text x="433.5" y="782" text-anchor="middle" font-size="7.9" fill="#6b7489" font-family="Liberation Sans">19:00-20:00</text>
<text x="480.0" y="782" text-anchor="middle" font-size="7.9" fill="#6b7489" font-family="Liberation Sans">20:00-21:00</text>
<text x="526.5" y="782" text-anchor="middle" font-size="7.9" fill="#6b7489" font-family="Liberation Sans">21:00-22:00</text>
<text x="573.0" y="782" text-anchor="middle" font-size="7.9" fill="#6b7489" font-family="Liberation Sans">22:00-23:00</text>
<text x="619.5" y="782" text-anchor="middle" font-size="7.9" fill="#6b7489" font-family="Liberation Sans">23:00-00:00</text>
<text x="666.1" y="782" text-anchor="middle" font-size="7.9" fill="#6b7489" font-family="Liberation Sans">00:00-01:00</text>
<text x="712.6" y="782" text-anchor="middle" font-size="7.9" fill="#6b7489" font-family="Liberation Sans">01:00-02:00</text>
<text x="759.1" y="782" text-anchor="middle" font-size="7.9" fill="#6b7489" font-family="Liberation Sans">02:00-03:00</text>
<text x="805.6" y="782" text-anchor="middle" font-size="7.9" fill="#6b7489" font-family="Liberation Sans">03:00-04:00</text>
<text x="852.1" y="782" text-anchor="middle" font-size="7.9" fill="#6b7489" font-family="Liberation Sans">04:00-05:00</text>
<text x="898.6" y="782" text-anchor="middle" font-size="7.9" fill="#6b7489" font-family="Liberation Sans">05:00-06:00</text>
<text x="945.1" y="782" text-anchor="middle" font-size="7.9" fill="#6b7489" font-family="Liberation Sans">06:00-07:00</text>
<text x="991.6" y="782" text-anchor="middle" font-size="7.9" fill="#6b7489" font-family="Liberation Sans">07:00-08:00</text>
<text x="1038.1" y="782" text-anchor="middle" font-size="7.9" fill="#6b7489" font-family="Liberation Sans">08:00-09:00</text>
<text x="1084.7" y="782" text-anchor="middle" font-size="7.9" fill="#6b7489" font-family="Liberation Sans">09:00-10:00</text>
<text x="1131.2" y="782" text-anchor="middle" font-size="7.9" fill="#6b7489" font-family="Liberation Sans">10:00-11:00</text>
<text x="1177.7" y="782" text-anchor="middle" font-size="7.9" fill="#6b7489" font-family="Liberation Sans">11:00-12:00</text>
<text x="1224.2" y="782" text-anchor="middle" font-size="7.9" fill="#6b7489" font-family="Liberation Sans">12:00-13:00</text>
<text x="1270.7" y="782" text-anchor="middle" font-size="7.9" fill="#6b7489" font-family="Liberation Sans">13:00-14:00</text>
<text x="1317.2" y="782" text-anchor="middle" font-size="7.9" fill="#6b7489" font-family="Liberation Sans">14:00-15:00</text>
<text x="1363.7" y="782" text-anchor="middle" font-size="7.9" fill="#6b7489" font-family="Liberation Sans">15:00-16:00</text>
<text x="1410.2" y="782" text-anchor="middle" font-size="7.9" fill="#6b7489" font-family="Liberation Sans">16:00-17:00</text>
<text x="1456.7" y="782" text-anchor="middle" font-size="7.9" fill="#6b7489" font-family="Liberation Sans">17:00-18:00</text>
<text x="921" y="799" text-anchor="middle" font-size="10.2" fill="#4f5b73" font-family="Liberation Sans">Time Period</text>
<text transform="translate(293 640) rotate(-90)" text-anchor="middle" font-size="10" fill="#4f5b73" font-family="Liberation Sans">Message Count</text>
<rect x="623.5" y="486.5" width="273" height="22.5" fill="#fff" stroke="#e3e7ee" stroke-width="1"/>
<path d="M628 497.4H651" stroke="#48cff5" stroke-width="2.4"/><circle cx="639.5" cy="497.4" r="2.2" fill="#d6ecf3" stroke="#4a5e6e" stroke-width="0.9"/>
<rect x="656" y="492" width="9" height="10" fill="#e6e2ea"/><rect x="656.3" y="493.5" width="2.6" height="8.5" fill="#8ad850"/><rect x="659.2" y="497" width="2.6" height="5" fill="#e83a7a"/><rect x="662.1" y="492.8" width="2.6" height="9.2" fill="#2f8ae8"/>
<text x="669" y="500.5" font-size="8.6" fill="#3d4455" font-family="Liberation Sans">Total Processed</text>
<rect x="744" y="492.8" width="10" height="10" fill="#ed4648"/>
<path d="M766 493L775 502M775 493L766 502" stroke="#ef4a6a" stroke-width="1.6"/>
<text x="779" y="500.5" font-size="8.6" fill="#3d4455" font-family="Liberation Sans">Failed</text>
<rect x="815.5" y="492.8" width="10.5" height="10" fill="#18b883"/>
<rect x="837" y="493" width="9" height="9" rx="1" fill="#4cbb6c"/><path d="M839 497.5L841 499.5L844.5 495" stroke="#fff" stroke-width="1.2" fill="none"/>
<text x="850.5" y="500.5" font-size="8.6" fill="#3d4455" font-family="Liberation Sans">Successful</text>

<g fill="#c2c2c2">
<path d="M1388 488.5h3l1-1.5h4l1 1.5h3v7h-12z"/><circle cx="1394" cy="491.8" r="2" fill="#fff"/><circle cx="1394" cy="491.8" r="1.1"/>
</g>
<g><circle cx="1416.5" cy="490" r="3.9" fill="none" stroke="#505050" stroke-width="1.6"/><rect x="1415" y="488.5" width="3" height="3" fill="#505050"/><path d="M1419.2 492.8L1422 495.6" stroke="#505050" stroke-width="1.8"/></g>
<g stroke="#c2c2c2" stroke-width="1.2" fill="#c2c2c2"><path d="M1436 486V497M1430.5 491.5H1441.5"/><path d="M1434.5 487.5L1436 485.5L1437.5 487.5Z M1434.5 495.5L1436 497.5L1437.5 495.5Z M1432 490L1430 491.5L1432 493Z M1440 490L1442 491.5L1440 493Z" stroke="none"/></g>
<rect x="1454.5" y="486" width="10" height="10" fill="#c2c2c2"/><path d="M1459.5 488V494M1456.5 491H1462.5" stroke="#fff" stroke-width="1.6"/>
<rect x="1472.5" y="486" width="10" height="10" fill="#c2c2c2"/><path d="M1474.5 491H1480.5" stroke="#fff" stroke-width="1.6"/>
<g stroke="#c2c2c2" stroke-width="1" fill="none"><path d="M1490.5 488V486H1492.5M1498.5 486H1500.5V488M1500.5 494V496H1498.5M1492.5 496H1490.5V494M1492.5 488L1498.5 494M1498.5 488L1492.5 494"/></g>
<path d="M1508.5 491L1514 486L1519.5 491H1518V496H1515.5V493H1512.5V496H1510V491Z" fill="#c2c2c2"/>
<g stroke="#c2c2c2" stroke-width="1.2" fill="none"><path d="M1532 489.5V487H1534.5M1538.5 487H1541V489.5M1541 493.5V496H1538.5M1534.5 496H1532V493.5"/></g>

</svg>

<!-- QUICK STATS -->
<svg class="a" style="left:1564px;top:240px" width="14" height="14" viewBox="0 0 14 14"><rect width="14" height="14" fill="#e6e2ea"/><rect x="0.5" y="2.5" width="3.8" height="11.5" fill="#8ad850"/><rect x="5.1" y="7" width="3.8" height="7" fill="#e83a7a"/><rect x="9.7" y="1" width="3.8" height="13" fill="#2f8ae8"/></svg>
<div class="t" style="left:1586px;top:240px;font-size:14.4px;color:#262730;-webkit-text-stroke:.3px #262730">Quick Stats</div>

<div class="card" style="top:276px;height:90px"></div>
<svg class="a" style="left:1584px;top:297px" width="12" height="10" viewBox="0 0 12 10"><rect width="12" height="9" fill="#eadcee"/><rect y="8.2" width="12" height="0.8" fill="#e0b8ea"/><circle cx="6.2" cy="4.8" r="3" fill="#3f86e0"/><circle cx="6.2" cy="4.8" r="1" fill="#a8ccf5"/></svg>
<div class="t" style="left:1605px;top:295px;font-size:11.7px;color:#66758c">EMAIL QUOTA</div>
<svg class="a" style="left:1584px;top:321px" width="12" height="10" viewBox="0 0 12 10"><rect width="12" height="9" fill="#eadcee"/><rect y="8.2" width="12" height="0.8" fill="#e0b8ea"/><circle cx="6.2" cy="4.8" r="3" fill="#3f86e0"/><circle cx="6.2" cy="4.8" r="1" fill="#a8ccf5"/></svg>
<div class="t" style="left:1602px;top:320px;font-size:11.55px;color:#262730">Email Server 'Available'.</div>
<div class="t" style="left:1582px;top:339px;font-size:11.8px;color:#262730">Used 8 out of 10000.</div>

<div class="card" style="top:369px;height:90px"></div>
<svg class="a" style="left:1584px;top:389px" width="12" height="12" viewBox="0 0 12 12"><rect x="0.3" y="2.5" width="1.3" height="5.5" fill="#d84a62"/><rect x="10.4" y="2.5" width="1.3" height="5.5" fill="#d84a62"/><rect x="1.4" y="1.8" width="9.2" height="9.6" rx="2" fill="#ead4ee"/><path d="M3 2.2Q6 0.2 9 2.2Z" fill="#e8c060"/><rect x="2.3" y="3.8" width="7.4" height="3.4" rx="1.2" fill="#2a3052"/><circle cx="4.5" cy="5.5" r=".85" fill="#3fb6f2"/><circle cx="7.5" cy="5.5" r=".85" fill="#3fb6f2"/><rect x="4.6" y="8.6" width="2.8" height=".8" fill="#5a4a70"/></svg>
<div class="t" style="left:1605px;top:388px;font-size:10.85px;color:#66758c">AGENTS</div>
<div class="t" style="left:1582px;top:414px;font-size:11.95px;color:#262730">Total Agents 0</div>
<svg class="a" style="left:1584px;top:431px" width="12" height="12" viewBox="0 0 12 12"><rect width="12" height="12" rx="1.5" fill="#4cbb6c"/><path d="M2.5 6 L5 8.5 L9.5 3.5" stroke="#fff" stroke-width="1.5" fill="none"/></svg>
<div class="t" style="left:1602px;top:431px;font-size:12px;color:#262730">All Agents Up</div>

<div class="card" style="top:463px;height:72px;border-color:#f08a8a"></div>
<svg class="a" style="left:1585px;top:481px" width="12" height="13" viewBox="0 0 12 13"><defs><linearGradient id="lk2" x1="0" y1="0" x2="0" y2="1"><stop offset="0" stop-color="#fbbf2c"/><stop offset="1" stop-color="#f57a22"/></linearGradient></defs><path d="M2.2 5V3.6A2.4 2.4 0 0 1 7 3.6V5" stroke="#a8a0b8" stroke-width="1.2" fill="none"/><rect x="0" y="4.2" width="9" height="8.6" rx=".6" fill="url(#lk2)"/><path d="M4.5 6.2L3.8 9.5H5.2Z" fill="#3a3060"/><path d="M9 3L11.2 4.2L10 11L8.8 10.5Z" fill="#c0b0e0"/></svg>
<div class="t" style="left:1605px;top:482px;font-size:10.6px;color:#66758c">CERTIFICATES</div>
<svg class="a" style="left:1583px;top:506px" width="13" height="12" viewBox="0 0 13 12"><path d="M6.5 0.5 L12.7 11.5 L0.3 11.5Z" fill="#fbb03a"/><path d="M6.5 0.5 L9 5 H4Z" fill="#fcd050"/><path d="M6.5 4 L6.5 8.4 M6.5 9.4 L6.5 10.4" stroke="#2e2a50" stroke-width="1.1"/></svg>
<div class="t" style="left:1602px;top:507px;font-size:11.55px;color:#262730">Expired/Expiring</div>

<div class="card" style="top:538px;height:73px"></div>
<svg class="a" style="left:1583px;top:557px" width="13" height="12" viewBox="0 0 13 12"><path d="M6.5 0.5 L12.7 11.5 L0.3 11.5Z" fill="#fbb03a"/><path d="M6.5 0.5 L9 5 H4Z" fill="#fcd050"/><path d="M6.5 4 L6.5 8.4 M6.5 9.4 L6.5 10.4" stroke="#2e2a50" stroke-width="1.1"/></svg>
<div class="t" style="left:1605px;top:557px;font-size:11.5px;color:#66758c">FAILED ACTIVATIONS</div>
<div class="t" style="left:1582px;top:582px;font-size:11.55px;color:#262730">0</div>

<div class="card" style="top:614px;height:72px"></div>
<svg class="a" style="left:1584px;top:632px" width="12" height="12" viewBox="0 0 12 12"><rect width="12" height="12" rx="1.5" fill="#4cbb6c"/><path d="M2.5 6 L5 8.5 L9.5 3.5" stroke="#fff" stroke-width="1.5" fill="none"/></svg>
<div class="t" style="left:1605px;top:632px;font-size:10.65px;color:#66758c">SUCCESS MESSAGES</div>
<div class="t" style="left:1582px;top:656px;font-size:11.55px;color:#262730">106,045</div>

<div class="card" style="top:688px;height:72px"></div>
<svg class="a" style="left:1584px;top:706px" width="12" height="12" viewBox="0 0 12 12"><path d="M1.5 1.5 L10.5 10.5 M10.5 1.5 L1.5 10.5" stroke="#ef4a6a" stroke-width="2.2"/></svg>
<div class="t" style="left:1605px;top:707px;font-size:10.95px;color:#66758c">FAILED MESSAGES</div>
<div class="t" style="left:1582px;top:732px;font-size:11px;color:#262730">1,988</div>

<div class="card" style="top:763px;height:106px"></div>
<svg class="a" style="left:1584px;top:783px" width="12" height="11" viewBox="0 0 12 11"><ellipse cx="6" cy="4.8" rx="5.6" ry="4.2" fill="#e0d4f0"/><path d="M2.5 8 L1.5 10.5 L5 8.8Z" fill="#e0d4f0"/></svg>
<div class="t" style="left:1605px;top:783px;font-size:10.95px;color:#66758c">TOTAL MESSAGES</div>
<div class="t" style="left:1582px;top:807px;font-size:11px;color:#262730">108,792</div>
<div class="a" style="left:1582px;top:827px;width:149px;height:4px;border-radius:2px;background:#e8ebf2"></div>
<div class="a" style="left:1582px;top:827px;width:146px;height:4px;border-radius:2px;background:linear-gradient(90deg,#141a2e,#2a6a8a 55%,#4fd0f8)"></div>
<div class="t" style="left:1605px;top:841px;font-size:11px;color:#66758c">97.5% Success Rate</div>

<!-- PEAK BOX -->
<div class="a" style="left:273px;top:817px;width:1276px;height:63px;border-radius:8px;background:#eef4fd;border-left:4px solid #3b82f6"></div>
<svg class="a" style="left:292px;top:832px" width="12" height="13" viewBox="0 0 12 13"><circle cx="6" cy="7.5" r="4.8" fill="#f04a6a"/><circle cx="6" cy="7.5" r="3.2" fill="#fde8ee"/><circle cx="2" cy="2.5" r="1.8" fill="#f5b030"/><circle cx="10" cy="2.5" r="1.8" fill="#f5b030"/><path d="M6 5.3 V7.5 H7.6" stroke="#c03050" stroke-width=".9" fill="none"/></svg>
<div class="t" style="left:310px;top:833px;font-size:12.1px;color:#262730;-webkit-text-stroke:.35px #262730">Peak Activity Hours</div>
<svg class="a" style="left:292px;top:853px" width="12" height="12" viewBox="0 0 12 12"><rect width="12" height="12" rx="1.5" fill="#4cbb6c"/><path d="M2.5 6 L5 8.5 L9.5 3.5" stroke="#fff" stroke-width="1.5" fill="none"/></svg>
<div class="t" style="left:310px;top:854px;font-size:10.8px;color:#14b270;-webkit-text-stroke:.15px #14b270">Success Peak:</div>
<div class="t" style="left:384px;top:854px;font-size:11.8px;color:#262730;-webkit-text-stroke:.35px #262730">19:00-20:00</div>
<div class="t" style="left:461.5px;top:853px;font-size:12.5px;color:#555b66">|</div>
<svg class="a" style="left:482px;top:853px" width="12" height="12" viewBox="0 0 12 12"><path d="M1.5 1.5 L10.5 10.5 M10.5 1.5 L1.5 10.5" stroke="#ef4a6a" stroke-width="2.2"/></svg>
<div class="t" style="left:499px;top:854px;font-size:11px;color:#e8404c;-webkit-text-stroke:.15px #e8404c">Failed Peak:</div>
<div class="t" style="left:564px;top:854px;font-size:11.8px;color:#262730;-webkit-text-stroke:.35px #262730">06:00-07:00</div>

</body></html>
